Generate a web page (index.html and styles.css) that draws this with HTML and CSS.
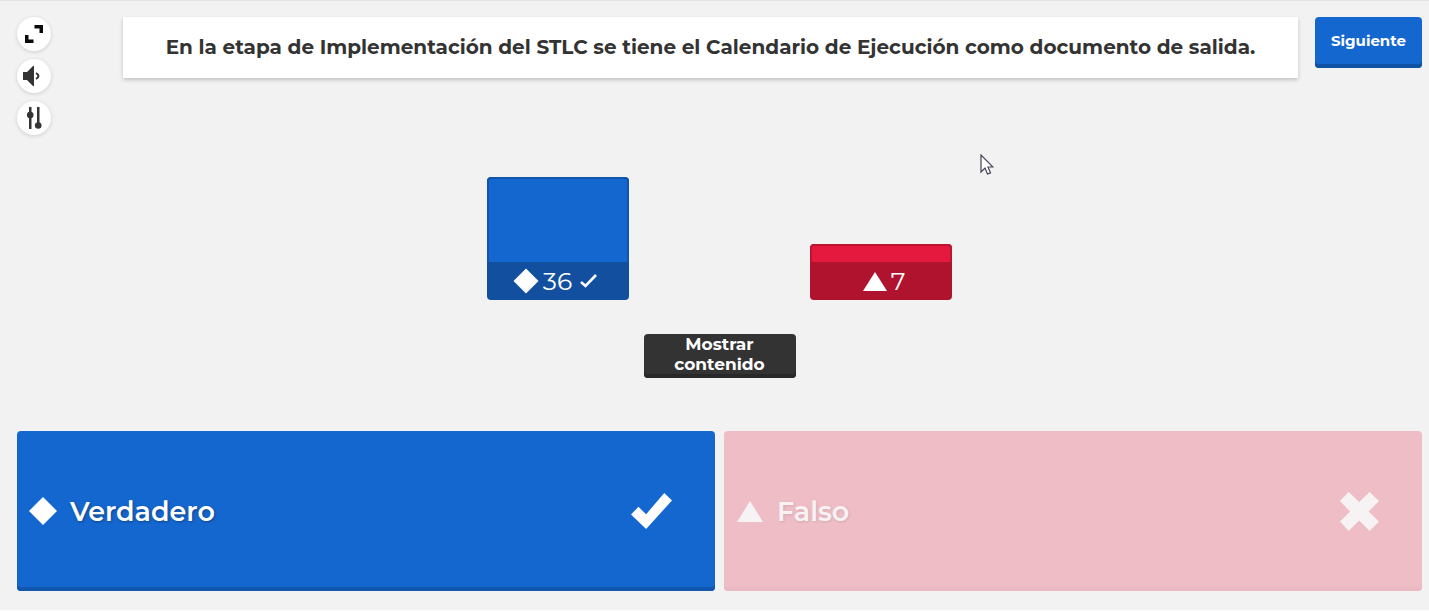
FILE: index.html
```html
<!DOCTYPE html>
<html lang="es">
<head>
<meta charset="utf-8">
<meta name="viewport" content="width=device-width, initial-scale=1">
<title>Resultados de la pregunta</title>
<link rel="stylesheet" href="styles.css">
</head>
<body>
<div class="page">
  <header class="header">
    <div class="tools">
      <button class="tool" type="button" aria-label="Pantalla completa">
        <svg width="18" height="18" viewBox="0 0 18 18" fill="#0b0b0b"><path d="M9.500 0H18v8h-3.500V3.500h-5zM0 10h3.500v4.500h5V18H0z"/></svg>
      </button>
      <button class="tool" type="button" aria-label="Volumen">
        <svg class="speaker" width="18" height="20" viewBox="0 0 18 20" fill="#333"><path d="M0 6h4l6-6h1v20h-1l-6-6H0z"/><path d="M13 7q5 3 0 6" fill="none" stroke="#333" stroke-width="2"/></svg>
      </button>
      <button class="tool" type="button" aria-label="Ajustes">
        <svg width="16" height="22" viewBox="0 0 16 22" fill="#333"><path d="M3 0h2.500v22H3zM11 0h2.500v19H11z"/><circle cx="4.200" cy="8" r="3.300"/><circle cx="12.200" cy="18.500" r="3.300"/></svg>
      </button>
    </div>
    <h1 class="question">En la etapa de Implementación del STLC se tiene el Calendario de Ejecución como documento de salida.</h1>
    <button class="next" type="button">Siguiente</button>
  </header>

  <main class="main">
    <div class="chart">
      <div class="bar bar-blue">
        <div class="bar-fill bar-fill-tall"></div>
        <div class="bar-label">
          <svg width="26" height="26" viewBox="0 0 26 26" fill="#fff"><path d="M13 0.5L25.500 13 13 25.500 0.500 13z"/></svg>
          <span>36</span>
          <svg class="bar-tick" width="17" height="14" viewBox="0 0 17 14" fill="none" stroke="#fff" stroke-width="2.600"><path d="M1 8l4.500 4L16 1"/></svg>
        </div>
      </div>
      <div class="bar bar-red">
        <div class="bar-fill bar-fill-short"></div>
        <div class="bar-label">
          <svg width="24" height="20" viewBox="0 0 24 20" fill="#fff"><path d="M12 1l12 19H0z"/></svg>
          <span>7</span>
        </div>
      </div>
    </div>
    <button class="show" type="button">Mostrar contenido</button>
  </main>

  <div class="answers">
    <button class="answer answer-blue" type="button">
      <svg width="28" height="28" viewBox="0 0 28 28" fill="#fff"><path d="M14 0l14 14-14 14L0 14z"/></svg>
      <span class="answer-text">Verdadero</span>
      <svg width="41" height="36" viewBox="0 0 122 107" fill="#fff"><path d="M0 64l22-23 23 22L99 0l23 22-77 85z"/></svg>
    </button>
    <button class="answer answer-red" type="button">
      <svg width="28" height="22" viewBox="0 0 28 22" fill="#fff"><path d="M14 1l13 21H1z"/></svg>
      <span class="answer-text">Falso</span>
      <svg width="39" height="39" viewBox="0 0 116 116" fill="#fff"><path d="M0 27L26 0l31 30L88 0l28 27-31 31 31 30-28 28-31-31-31 31L0 88l30-30z"/></svg>
    </button>
  </div>

  <svg class="cursor" width="14" height="21" viewBox="0 0 14 21" aria-hidden="true"><path d="M1 1v17l4-4 2.500 6 3-1.200L8 13h5z" fill="#fff" stroke="#445" stroke-width="1.200"/></svg>
</div>
</body>
</html>
```

FILE: styles.css
```css
* { box-sizing: border-box; }

body {
  margin: 0;
  background: #f2f2f2;
  color: #333;
  font-family: Montserrat, Inter, "Open Sans", sans-serif;
}

button {
  border: 0;
  padding: 0;
  font: inherit;
  cursor: pointer;
}

svg { display: block; flex: none; }

.page {
  position: relative;
  display: flex;
  flex-direction: column;
  min-height: 100vh;
  padding: 16px 7px 19px 17px;
  border-top: 1px solid #e4e4e4;
  border-bottom: 1px solid #fff;
}

.header {
  display: flex;
  align-items: flex-start;
}

.tools {
  display: flex;
  flex-direction: column;
  gap: 8px;
  margin-right: 72px;
}

.tool {
  display: grid;
  place-items: center;
  width: 34px;
  height: 34px;
  border-radius: 50%;
  background: #fff;
  box-shadow: 0 1px 4px rgba(0, 0, 0, 0.15);
}

.speaker { margin-right: 4px; }

.question {
  flex: 1;
  margin: 0 17px 0 0;
  padding: 16px 24px;
  background: #fff;
  box-shadow: 0 2px 4px rgba(0, 0, 0, 0.2);
  font-size: 20px;
  font-weight: 700;
  line-height: 29px;
  text-align: center;
}

.next {
  width: 107px;
  height: 51px;
  padding-bottom: 4px;
  border-radius: 4px;
  background: #1567d0;
  box-shadow: inset 0 -4px #0f52a3;
  color: #fff;
  font-size: 15px;
  font-weight: 700;
}

.main {
  flex: 1;
  display: flex;
  flex-direction: column;
  align-items: center;
  justify-content: flex-end;
  padding: 42px 0 53px;
}

.chart {
  display: flex;
  align-items: flex-end;
  gap: 181px;
  margin-bottom: 34px;
}

.bar {
  width: 142px;
  border-radius: 4px;
  overflow: hidden;
}

.bar-fill {
  border: 2px solid;
  border-bottom: 0;
  border-radius: 4px 4px 0 0;
}

.bar-fill-tall { height: 85px; }
.bar-fill-short { height: 18px; }
.bar-blue { background: #12509f; }
.bar-blue .bar-fill { background: #1567d0; border-color: #1054ab; }
.bar-red { background: #b0132d; }
.bar-red .bar-fill { background: #e4193d; border-color: #bd1432; }

.bar-label {
  display: flex;
  align-items: center;
  justify-content: center;
  gap: 4px;
  height: 38px;
  color: #fff;
  font-size: 25px;
}

.bar-blue .bar-label { padding-right: 6px; }
.bar-red .bar-label { padding-left: 6px; }

.bar-tick { margin-left: 4px; }

.show {
  width: 152px;
  height: 44px;
  padding: 0 16px 4px;
  border-radius: 4px;
  background: #333;
  box-shadow: inset 0 -4px #282828;
  color: #fff;
  font-size: 17px;
  font-weight: 700;
  line-height: 20px;
}

.answers {
  display: grid;
  grid-template-columns: 1fr 1fr;
  gap: 9px;
}

.answer {
  display: flex;
  align-items: center;
  gap: 13px;
  min-height: 160px;
  padding: 0 43px 0 12px;
  border-radius: 4px;
  color: #fff;
  font-size: 27px;
  font-weight: 600;
  text-align: left;
  text-shadow: 1px 1px 3px rgba(0, 0, 0, 0.35);
}

.answer-text { flex: 1; }

.answer-blue {
  background: #1567d0;
  box-shadow: inset 0 -4px #1057ad;
}

.answer-red {
  background: #eebdc6;
  box-shadow: inset 0 -4px #ebb9c3;
  color: #f7f3f4;
  text-shadow: 1px 1px 3px rgba(0, 0, 0, 0.1);
}

.answer-red svg { fill: #f7f3f4; }

.cursor {
  position: absolute;
  left: 980px;
  top: 153px;
}
```
